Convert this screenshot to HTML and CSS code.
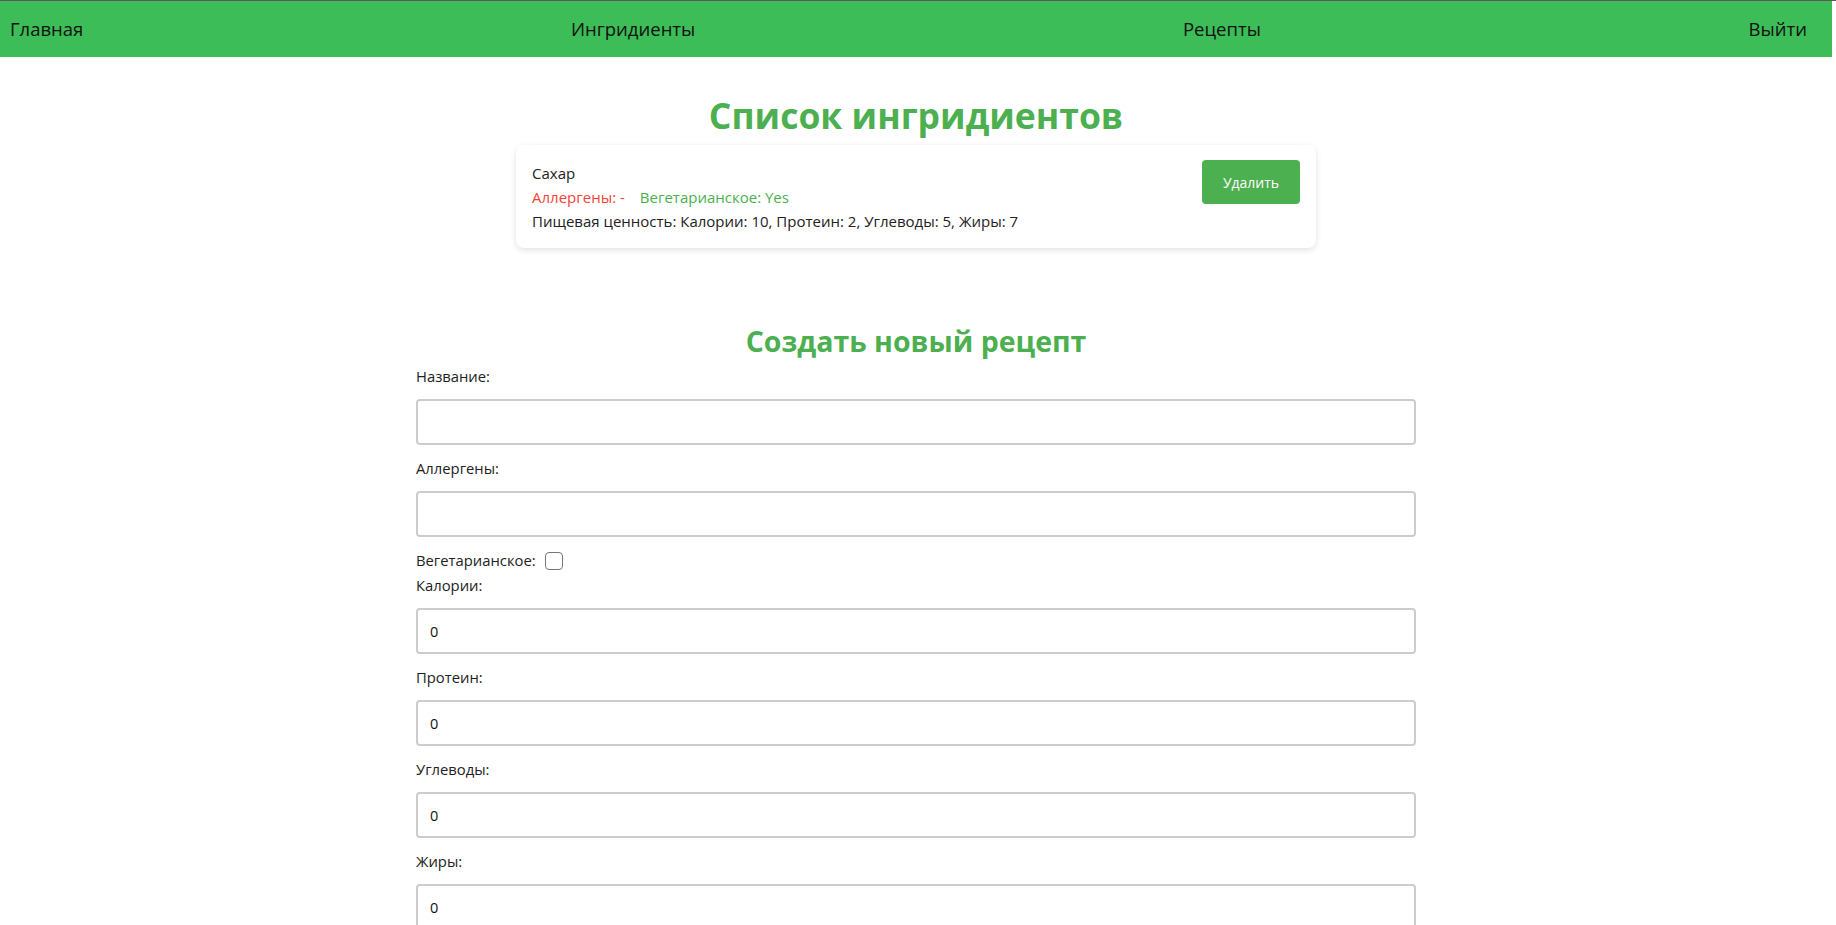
FILE: index.html
```html
<!DOCTYPE html>
<html lang="ru">
<head>
<meta charset="utf-8">
<title>Список ингридиентов</title>
<link rel="stylesheet" href="styles.css">
</head>
<body>
<div class="topline"></div>
<div class="page">
  <nav class="navbar">
    <a href="#" class="nav-link">Главная</a>
    <a href="#" class="nav-link">Ингридиенты</a>
    <a href="#" class="nav-link">Рецепты</a>
    <a href="#" class="nav-link">Выйти</a>
  </nav>

  <h1 class="title">Список ингридиентов</h1>

  <div class="card">
    <div class="card-info">
      <p class="card-line">Сахар</p>
      <p class="card-line"><span class="allergens">Аллергены: -</span><span class="veg">Вегетарианское: Yes</span></p>
      <p class="card-line">Пищевая ценность: Калории: 10, Протеин: 2, Углеводы: 5, Жиры: 7</p>
    </div>
    <button class="btn-delete" type="button">Удалить</button>
  </div>

  <h2 class="subtitle">Создать новый рецепт</h2>

  <form class="recipe-form">
    <label class="field-label">Название:</label>
    <input class="field-input" type="text">
    <label class="field-label">Аллергены:</label>
    <input class="field-input" type="text">
    <div class="check-row">
      <span class="check-text">Вегетарианское:</span>
      <input class="check-box" type="checkbox">
    </div>
    <label class="field-label">Калории:</label>
    <input class="field-input" type="number" value="0">
    <label class="field-label">Протеин:</label>
    <input class="field-input" type="number" value="0">
    <label class="field-label">Углеводы:</label>
    <input class="field-input" type="number" value="0">
    <label class="field-label">Жиры:</label>
    <input class="field-input" type="number" value="0">
  </form>
</div>
</body>
</html>
```

FILE: styles.css
```css
html, body {
  margin: 0;
  padding: 0;
  background: #ffffff;
  font-family: "Open Sans", "Noto Sans", sans-serif;
  color: #222222;
}

.topline {
  height: 1px;
  background: #5a5a5a;
}

.page {
  margin-right: 4px;
}

.navbar {
  display: flex;
  justify-content: space-between;
  align-items: center;
  height: 56px;
  padding: 0 25px 0 10px;
  background: #3cbd57;
}

.nav-link {
  color: #111111;
  text-decoration: none;
  font-size: 18.5px;
  line-height: 24px;
}

.title {
  margin: 36px 0 8px;
  text-align: center;
  color: #4caf50;
  font-size: 35.5px;
  line-height: 44px;
  font-weight: 700;
}

.card {
  display: flex;
  justify-content: space-between;
  align-items: flex-start;
  width: 800px;
  box-sizing: border-box;
  margin: 0 auto;
  padding: 15px 16px 17px;
  background: #ffffff;
  border-radius: 8px;
  box-shadow: 0 2px 6px rgba(0, 0, 0, 0.12);
}

.card-info {
  padding-top: 3px;
}

.card-line {
  margin: 0 0 4px;
  font-size: 15px;
  line-height: 20px;
}

.card-line:last-child {
  margin-bottom: 0;
}

.allergens {
  color: #f44336;
  margin-right: 15px;
}

.veg {
  color: #4caf50;
}

.btn-delete {
  width: 98px;
  height: 44px;
  border: none;
  border-radius: 4px;
  background: #4caf50;
  color: #ffffff;
  font-family: inherit;
  font-size: 14px;
}

.subtitle {
  margin: 73px 0 6px;
  text-align: center;
  color: #4caf50;
  font-size: 28.5px;
  line-height: 40px;
  font-weight: 700;
}

.recipe-form {
  display: flex;
  flex-direction: column;
  width: 1000px;
  margin: 0 auto;
}

.field-label {
  display: block;
  font-size: 14.8px;
  line-height: 19px;
}

.field-input {
  box-sizing: border-box;
  width: 100%;
  height: 46px;
  margin: 13px 0 14px;
  padding: 0 12px;
  border: 2px solid #cccccc;
  border-radius: 4px;
  font-family: inherit;
  font-size: 14.5px;
  color: #111111;
  background: #ffffff;
}

.check-row {
  display: flex;
  align-items: center;
  height: 19px;
  margin-bottom: 6px;
  font-size: 14.8px;
  line-height: 19px;
}

.check-box {
  appearance: none;
  -webkit-appearance: none;
  width: 18px;
  height: 18px;
  margin: 0 0 0 9px;
  border: 1.5px solid #767676;
  border-radius: 4px;
  background: #ffffff;
}
```
